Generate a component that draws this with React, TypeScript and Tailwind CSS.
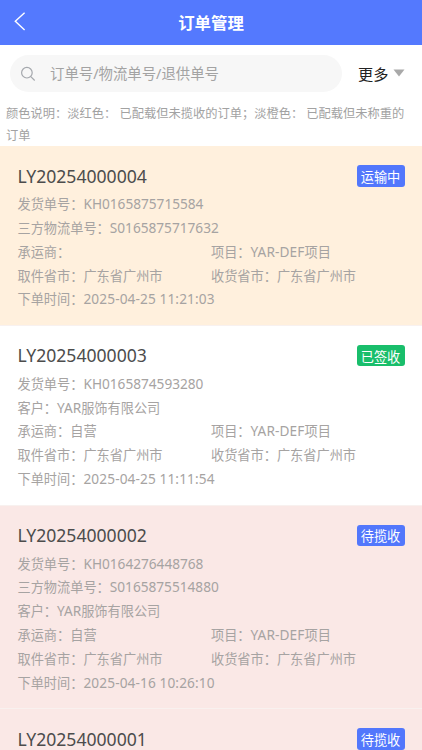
import React from 'react';

interface Order {
  id: string;
  status: string;
  statusClass: string;
  cardClass: string;
  // each row has one or two [label, latin value, chinese value] cells
  rows: string[][][];
}

const route = [
  ['取件省市：', '', '广东省广州市'],
  ['收货省市：', '', '广东省广州市'],
];
const project = ['项目：', 'YAR-DEF', '项目'];
const customer = ['客户：', 'YAR', '服饰有限公司'];

const orders: Order[] = [
  {
    id: 'LY20254000004',
    status: '运输中',
    statusClass: 'bg-[#5277fc]',
    cardClass: 'bg-[#fff0dd]',
    rows: [
      [['发货单号：', 'KH0165875715584']],
      [['三方物流单号：', 'S0165875717632']],
      [['承运商：'], project],
      route,
      [['下单时间：', '2025-04-25 11:21:03']],
    ],
  },
  {
    id: 'LY20254000003',
    status: '已签收',
    statusClass: 'bg-[#19be6b]',
    cardClass: 'bg-white',
    rows: [
      [['发货单号：', 'KH0165874593280']],
      [customer],
      [['承运商：', '', '自营'], project],
      route,
      [['下单时间：', '2025-04-25 11:11:54']],
    ],
  },
  {
    id: 'LY20254000002',
    status: '待揽收',
    statusClass: 'bg-[#5277fc]',
    cardClass: 'bg-[#fae8e6]',
    rows: [
      [['发货单号：', 'KH0164276448768']],
      [['三方物流单号：', 'S0165875514880']],
      [customer],
      [['承运商：', '', '自营'], project],
      route,
      [['下单时间：', '2025-04-16 10:26:10']],
    ],
  },
  {
    id: 'LY20254000001',
    status: '待揽收',
    statusClass: 'bg-[#5277fc]',
    cardClass: 'bg-[#fae8e6]',
    rows: [],
  },
];

const Header: React.FC = () => (
  <header className="grid h-[45px] shrink-0 grid-cols-[60px_1fr_60px] items-center bg-[#5479fe] text-white">
    <svg className="ml-[13px] -mt-[3px]" width="13" height="20" viewBox="0 0 13 20" fill="none" stroke="currentColor" strokeWidth="1.4">
      <path d="M11.6 1.8 2.3 10.3l9.3 8.8" />
    </svg>
    <h1 className="text-center text-[16.4px] leading-[24px] font-bold">订单管理</h1>
  </header>
);

const SearchBar: React.FC = () => (
  <div className="flex h-[57px] shrink-0 items-center pl-[10px]">
    <div className="flex h-[37px] w-[332px] items-center rounded-full bg-[#f7f7f7] pl-[10px]">
      <svg width="16" height="16" viewBox="0 0 16 16" fill="none" stroke="#a5a8ad" strokeWidth="1.2">
        <circle cx="6.9" cy="6.7" r="5.3" />
        <path d="m10.8 10.6 3.9 3.9" />
      </svg>
      <span className="ml-[14px] text-[14.4px] leading-[20px] text-[#a3a3a3]">订单号/物流单号/退供单号</span>
    </div>
    <span className="ml-4 text-[15.2px] leading-[20px] text-[#222]">更多</span>
    <svg className="ml-[5px] -mt-[2px]" width="12" height="8" viewBox="0 0 12 8">
      <path d="M0.5 0.5h11L6 7.5z" fill="#a9a9a9" />
    </svg>
  </div>
);

const OrderCard: React.FC<{ order: Order }> = ({ order }) => (
  <div className={`shrink-0 border-b border-[#f8f1ef] px-[17.5px] pt-[17.5px] pb-[13.7px] ${order.cardClass}`}>
    <div className="flex h-[28.5px] items-start justify-between">
      <h2 className="text-[17.6px] leading-[25px] text-[#4c4c4c]">{order.id}</h2>
      <span className={`mt-[1.5px] flex h-[21.5px] w-[48px] items-center justify-center rounded-[3px] pt-[2px] text-[13.2px] leading-[20px] text-white ${order.statusClass}`}>
        {order.status}
      </span>
    </div>
    {order.rows.map((row, index) => (
      <div key={index} className="grid h-[23.8px] grid-cols-2 text-[13.2px] leading-[23.8px] whitespace-nowrap text-[#a6a3a2]">
        {row.map(([label, latin, chinese]) => (
          <span key={label}>
            {label}
            <span className={latin?.includes('-') ? 'text-[13.65px] tracking-[0.12px]' : 'text-[13.65px]'}>{latin}</span>
            {chinese}
          </span>
        ))}
      </div>
    ))}
  </div>
);

const App: React.FC = () => {
  return (
    <div className="flex h-[750px] w-[422px] flex-col overflow-hidden bg-white font-['Noto_Sans','Noto_Sans_CJK_SC',sans-serif]">
      <Header />
      <SearchBar />
      <p className="h-[44.2px] shrink-0 pt-px pl-[6px] text-[12.25px] leading-[22px] whitespace-nowrap text-[#a2a2a2]">
        颜色说明：淡红色： 已配载但未揽收的订单；淡橙色： 已配载但未称重的
        <br />
        订单
      </p>
      {orders.map((order) => (
        <OrderCard key={order.id} order={order} />
      ))}
    </div>
  );
};

export default App;
